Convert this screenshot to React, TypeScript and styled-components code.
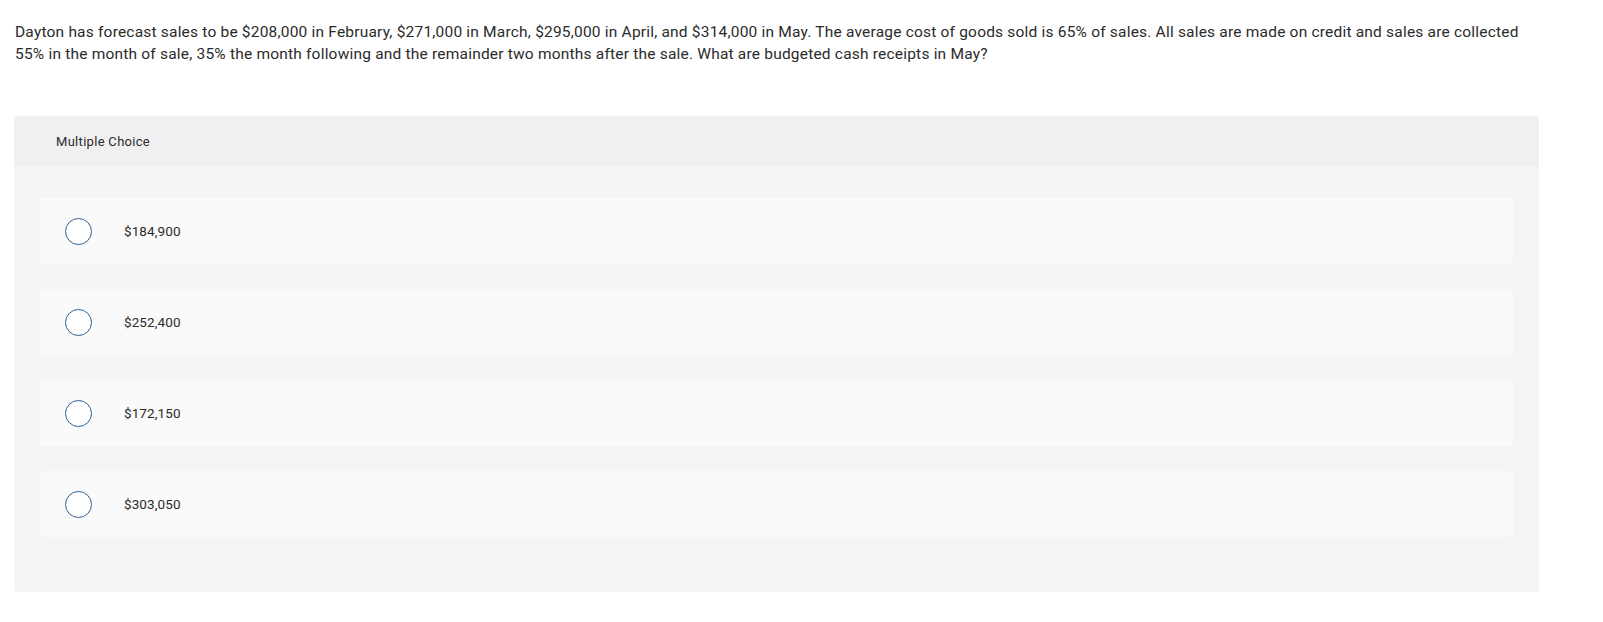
import React from "react";
import styled, { createGlobalStyle } from "styled-components";

const Global = createGlobalStyle`
  html, body { margin: 0; padding: 0; background: #ffffff; }
  body { font-family: Roboto, "Liberation Sans", Arial, sans-serif; color: #2b2b2b; }
`;

const Page = styled.div`
  padding: 21px 64px 0 14px;
  display: flex;
  flex-direction: column;
`;

const Question = styled.p`
  margin: 0 0 0 1px;
  font-size: 15.5px;
  letter-spacing: 0.2px;
  line-height: 22px;
  color: #2b2b2b;
`;

const Panel = styled.section`
  margin-top: 51px;
  background: #f5f5f5;
  border-radius: 4px;
  padding-bottom: 55px;
  display: flex;
  flex-direction: column;
`;

const Header = styled.div`
  height: 50px;
  background: #f0f0f0;
  border-radius: 4px 4px 0 0;
  display: flex;
  align-items: center;
  padding-left: 42px;
  font-size: 13px;
  letter-spacing: 0.3px;
  color: #2b2b2b;
`;

const Options = styled.div`
  display: flex;
  flex-direction: column;
  gap: 25px;
  padding: 32px 26px 0 26px;
`;

const Option = styled.label`
  height: 66px;
  background: #fafafa;
  border-radius: 4px;
  display: flex;
  align-items: center;
  padding-left: 25px;
  gap: 32px;
  cursor: pointer;
  font-size: 13.5px;
  letter-spacing: 0.1px;
  color: #2b2b2b;
`;

const Radio = styled.span`
  width: 25px;
  height: 25px;
  border: 1.5px solid #2f5f8e;
  border-radius: 50%;
  background: #ffffff;
  flex: none;
`;

const choices = ["$184,900", "$252,400", "$172,150", "$303,050"];

export default function App() {
  return (
    <>
      <Global />
      <Page>
        <Question>
          Dayton has forecast sales to be $208,000 in February, $271,000 in March, $295,000 in April, and $314,000 in May. The average cost of goods sold is 65% of sales. All sales are made on credit and sales are collected 55% in the month of sale, 35% the month following and the remainder two months after the sale. What are budgeted cash receipts in May?
        </Question>
        <Panel>
          <Header>Multiple Choice</Header>
          <Options>
            {choices.map((c) => (
              <Option key={c}>
                <Radio />
                {c}
              </Option>
            ))}
          </Options>
        </Panel>
      </Page>
    </>
  );
}
